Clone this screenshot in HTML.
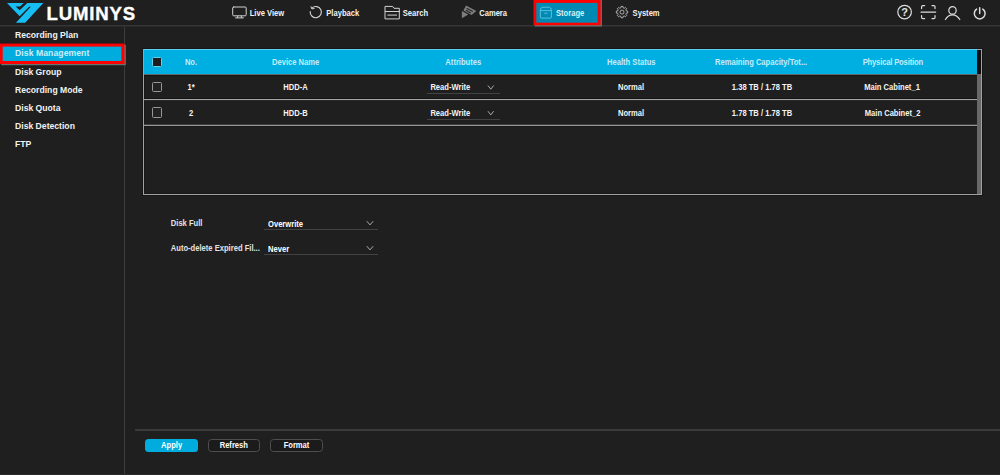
<!DOCTYPE html>
<html><head><meta charset="utf-8">
<style>
*{box-sizing:border-box;margin:0;padding:0}
html,body{width:1000px;height:475px;overflow:hidden;background:#1f1f1f;font-family:"Liberation Sans",sans-serif;color:#f2f2f2}
body{position:relative}
.abs{position:absolute}
.t{position:absolute;white-space:nowrap;font-weight:700;font-size:7.6px;line-height:12px;color:#f4f4f4;transform:scaleY(1.12);transform-origin:0 72%}
.c{transform:translateX(-50%) scaleY(1.12)}
#logo-txt{left:46.5px;top:3px;font-size:18.6px;letter-spacing:.85px;-webkit-text-stroke:.35px #fff;font-weight:700;color:#fff;line-height:22px;white-space:nowrap}
.nav{top:8.4px;color:#f2f2f2}
.mi{left:15px;font-size:8.65px;color:#f2f2f2;transform:none}
.hc{top:57.3px;color:#c6ebf9}
.r1{top:81.6px}
.r2{top:108px}
.cb{left:152px;width:10.3px;height:10.3px;border:1px solid #979797;border-radius:1.5px;background:#222}
.ul{height:1px;background:#424242}
.btn{top:438.7px;width:52.4px;height:13.2px;border-radius:3.5px}
svg{position:absolute;left:0;top:0}
</style></head><body>
<!-- header -->
<div class="abs" style="left:0;top:25px;width:1000px;height:1px;background:#363636"></div>
<div class="abs" style="left:0;top:26px;width:1000px;height:1px;background:#292929"></div>
<div class="abs" style="left:124px;top:27px;width:1px;height:448px;background:#3c3c3c"></div>
<svg width="1000" height="475" viewBox="0 0 1000 475">
<rect x="1.2" y="44.8" width="124.6" height="20.4" fill="#6b7272"/>
<rect x="-1" y="43.6" width="125.5" height="20.4" fill="#ff0000"/>
<rect x="2.7" y="46.6" width="118.7" height="14.4" fill="#00abdd"/>
<rect x="534.8" y="0" width="67.1" height="26.5" fill="#6b7272"/>
<rect x="533.5" y="-1" width="67.1" height="26.2" fill="#ff0000"/>
<rect x="536.3" y="2.9" width="61.4" height="19.8" fill="#0089b2"/>
</svg>
<div id="logo-txt" class="abs">LUMINYS</div>

<!-- sidebar -->
<div class="t mi" style="top:29.1px">Recording Plan</div>
<div class="t mi" style="top:47.1px;color:#cdeffb;letter-spacing:.07px">Disk Management</div>
<div class="t mi" style="top:65.5px">Disk Group</div>
<div class="t mi" style="top:83.7px">Recording Mode</div>
<div class="t mi" style="top:101.9px">Disk Quota</div>
<div class="t mi" style="top:120.1px">Disk Detection</div>
<div class="t mi" style="top:138.3px">FTP</div>

<!-- nav -->
<div class="t nav" style="left:249.7px">Live View</div>
<div class="t nav" style="left:326.3px">Playback</div>
<div class="t nav" style="left:402.7px">Search</div>
<div class="t nav" style="left:479.2px">Camera</div>
<div class="t nav" style="left:556px;color:#d9f2fa">Storage</div>
<div class="t nav" style="left:632.6px">System</div>

<!-- table -->
<div class="abs" style="left:143px;top:48.7px;width:838.6px;height:145.9px;border:1px solid #a2a2a2;box-shadow:0 0 0 1px #161616, inset 0 0 0 1px #181818"></div>
<div class="abs" style="left:144px;top:48.7px;width:833px;height:25.3px;background:#00afe1;border-top:1px solid #63d0f3"></div>
<div class="abs" style="left:977px;top:50px;width:3.8px;height:24.4px;background:#0d0d0d"></div>
<div class="abs" style="left:977px;top:74.4px;width:3.8px;height:119.4px;background:#686868"></div>
<svg width="1000" height="475" viewBox="0 0 1000 475">
<rect x="144" y="74" width="833" height="0.75" fill="#a9a9a9"/>
<rect x="144" y="74.75" width="833" height="0.85" fill="#101010"/>
<rect x="144" y="98.3" width="833" height="0.7" fill="#121212"/>
<rect x="144" y="99" width="833" height="1.25" fill="#a6a6a6"/>
<rect x="144" y="100.25" width="833" height="0.6" fill="#171717"/>
<rect x="144" y="124" width="833" height="0.7" fill="#121212"/>
<rect x="144" y="124.7" width="833" height="1.25" fill="#a6a6a6"/>
<rect x="144" y="125.95" width="833" height="0.6" fill="#171717"/>
</svg>

<div class="cb abs" style="top:56.6px;border-color:#66cdec;background:#1d1d1d"></div>
<div class="cb abs" style="top:81.6px"></div>
<div class="cb abs" style="top:107.4px"></div>

<div class="t hc c" style="left:191px">No.</div>
<div class="t hc c" style="left:295.6px">Device Name</div>
<div class="t hc c" style="left:463.3px">Attributes</div>
<div class="t hc c" style="left:631.3px">Health Status</div>
<div class="t hc c" style="left:761.1px">Remaining Capacity/Tot...</div>
<div class="t hc c" style="left:892.8px;letter-spacing:-.15px">Physical Position</div>

<div class="t r1 c" style="left:191px">1*</div>
<div class="t r1 c" style="left:295.5px">HDD-A</div>
<div class="t r1" style="left:430.4px;top:81.9px">Read-Write</div>
<div class="t r1 c" style="left:631px">Normal</div>
<div class="t r1 c" style="left:762px">1.38 TB / 1.78 TB</div>
<div class="t r1 c" style="left:892px">Main Cabinet_1</div>

<div class="t r2 c" style="left:191px">2</div>
<div class="t r2 c" style="left:295.5px">HDD-B</div>
<div class="t r2" style="left:430.4px;top:108.2px">Read-Write</div>
<div class="t r2 c" style="left:631px">Normal</div>
<div class="t r2 c" style="left:762px">1.78 TB / 1.78 TB</div>
<div class="t r2 c" style="left:892.6px">Main Cabinet_2</div>

<div class="ul abs" style="left:427px;top:93px;width:72.6px"></div>
<div class="ul abs" style="left:427px;top:119px;width:72.6px"></div>

<!-- form -->
<div class="t" style="left:170.8px;top:217.9px;color:#e3e3e3">Disk Full</div>
<div class="t" style="left:170.8px;top:242.9px;color:#e3e3e3">Auto-delete Expired Fil...</div>
<div class="t" style="left:268px;top:218.6px;color:#fff">Overwrite</div>
<div class="t" style="left:268px;top:243.9px;color:#fff">Never</div>
<div class="ul abs" style="left:264.4px;top:229px;width:114px"></div>
<div class="ul abs" style="left:264.4px;top:254.2px;width:114px"></div>

<!-- footer -->
<div class="abs" style="left:0;top:474px;width:1000px;height:1px;background:#2b2b2b"></div>
<div class="abs" style="left:135px;top:429.4px;width:865px;height:1.2px;background:#3a3a3a"></div>
<div class="btn abs" style="left:145.2px;background:#00abdd"></div>
<div class="btn abs" style="left:207.5px;border:1px solid #4e4e4e;background:#1b1b1b"></div>
<div class="btn abs" style="left:270.2px;border:1px solid #4e4e4e;background:#1b1b1b"></div>
<div class="t c" style="left:171.6px;top:440px;color:#fff">Apply</div>
<div class="t c" style="left:233.8px;top:440px;color:#fff">Refresh</div>
<div class="t c" style="left:296.5px;top:440px;color:#fff">Format</div>

<!-- icons -->
<svg width="1000" height="475" viewBox="0 0 1000 475" fill="none">
<!-- logo -->
<path d="M7.0 2.9 L23.7 2.9 L20.1 6.4 L15.6 6.4 L19.65 10.2 L27.3 2.9 L43.4 2.9 L25.2 22.75 L15.9 22.75 L30.8 6.65 L29.2 6.65 L19.65 16.2 Z" fill="#17bef4"/>
<!-- live view monitor -->
<g stroke="#d2d2d2" stroke-width="1" stroke-linecap="round" stroke-linejoin="round">
<rect x="232.7" y="7" width="13.5" height="8.8" rx="1"/>
<path d="M235.6 17.9 H243.4 M237.8 16.2 L237.2 17.7 M241.2 16.2 L241.8 17.7"/>
<!-- playback -->
<path d="M311.9 8.1 A5.6 5.6 0 1 1 310.2 11.6" stroke-width="1.15"/>
<path d="M311.0 6.7 L311.9 8.9 L314.2 8.5"/>
<!-- search folder -->
<path d="M385.4 6.4 H392.6 L394 8.3 H399.3 V18.9 H385.4 Z M385.4 11.5 H399.3 M387.8 15.1 H396.6"/>
</g>
<!-- camera -->
<g fill="#7e7e7e">
<path d="M466.1 5.4 L476.3 11.1 L471.6 15.1 L463.4 10.4 Z"/>
<path d="M461.9 11.1 L461.9 18.2 L468.2 14.6 Z"/>
</g>
<path d="M466.6 8.2 L472.8 11.6 M465.9 10.2 L470.8 12.9" stroke="#262626" stroke-width="1.1"/>
<!-- storage -->
<g stroke="#6fcde8" stroke-width="0.8" stroke-linejoin="round">
<path d="M540.3 10.6 C540.6 8 541.5 7.2 543 7.2 H548.7 C550.2 7.2 551.1 8 551.4 10.6 V17 Q551.4 18.1 550.3 18.1 H541.4 Q540.3 18.1 540.3 17 Z"/>
<path d="M540.3 10.6 H551.4 M544.2 13.2 H547.5"/>
</g>
<!-- gear -->
<g stroke="#bcbcbc" stroke-width="0.9" stroke-linejoin="round">
<path d="M623.10 16.41 L622.97 17.77 L621.03 17.77 L620.90 16.41 L619.73 15.93 L618.68 16.80 L617.30 15.42 L618.17 14.37 L617.69 13.20 L616.33 13.07 L616.33 11.13 L617.69 11.00 L618.17 9.83 L617.30 8.78 L618.68 7.40 L619.73 8.27 L620.90 7.79 L621.03 6.43 L622.97 6.43 L623.10 7.79 L624.27 8.27 L625.32 7.40 L626.70 8.78 L625.83 9.83 L626.31 11.00 L627.67 11.13 L627.67 13.07 L626.31 13.20 L625.83 14.37 L626.70 15.42 L625.32 16.80 L624.27 15.93 Z"/>
<circle cx="622.0" cy="12.1" r="2.0"/>
</g>
<!-- right icons -->
<g stroke="#dcdcdc" stroke-width="1.2" stroke-linecap="round" stroke-linejoin="round">
<circle cx="904.6" cy="12.1" r="6.8"/>
<path d="M921.6 8.6 V6.8 Q921.6 5.6 922.8 5.6 H924.6 M932 5.6 H933.8 Q935 5.6 935 6.8 V8.6 M935 15.6 V17.4 Q935 18.6 933.8 18.6 H932 M924.6 18.6 H922.8 Q921.6 18.6 921.6 17.4 V15.6 M921 12.1 H935.7"/>
<circle cx="952.5" cy="10.4" r="3.7"/>
<path d="M945.4 19.5 Q948.2 14.8 952.5 14.8 Q956.8 14.8 959.8 19.5"/>
<path d="M976.6 9.1 A5.4 5.4 0 1 0 982.8 9.1" stroke-width="1.5"/>
<path d="M979.7 7.8 V13.4" stroke-width="1.5"/>
</g>
<!-- chevrons -->
<g stroke="#b8b8b8" stroke-width="0.9" stroke-linecap="round" stroke-linejoin="round">
<path d="M488.2 85.8 L490.8 89.2 L493.4 85.8"/>
<path d="M488.2 111.5 L490.8 114.9 L493.4 111.5"/>
<path d="M367.1 221.5 L370 224.9 L372.9 221.5"/>
<path d="M367.1 246.5 L370 249.9 L372.9 246.5"/>
</g>
<text x="904.7" y="16" text-anchor="middle" font-family="Liberation Sans, sans-serif" font-weight="700" font-size="11" fill="#e4e4e4">?</text>
</svg>
</body></html>
